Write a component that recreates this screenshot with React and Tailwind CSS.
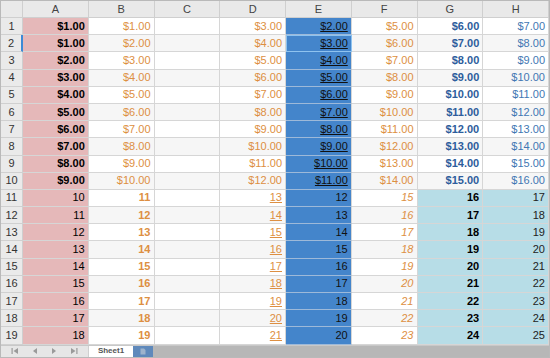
import React from "react";

const cols = ["A", "B", "C", "D", "E", "F", "G", "H"];
const money = (n) => `$${n}.00`;

function cellFor(col, r) {
  // r is 1..19
  const top = r <= 10;
  const base = "flex items-center justify-end pr-[3px] border-r border-b border-[#d6d6d6] whitespace-nowrap";
  const alt = r % 2 === 0 ? "bg-[#f6f6f6]" : "bg-white";
  switch (col) {
    case "A":
      return {
        cls: `${base} bg-[#e5b8b9] text-black ${top ? "font-bold" : ""}`,
        text: top ? money(r === 1 ? 1 : r - 1) : String(r - 1),
      };
    case "B":
      return {
        cls: `${base} ${alt} text-[#dd8f42] ${top ? "" : "font-bold"}`,
        text: top ? money(r) : String(r),
      };
    case "C":
      return { cls: `${base} ${alt}`, text: "" };
    case "D":
      return {
        cls: `${base} ${alt} text-[#dd8f42]`,
        text: top ? money(r + 2) : String(r + 2),
        u: !top,
      };
    case "E":
      return {
        cls: `${base} bg-[#4485cb] border-b-[#9db9d9] text-[#111]`,
        text: top ? money(r + 1) : String(r + 1),
        u: top,
      };
    case "F":
      return {
        cls: `${base} ${alt} text-[#dd8f42] ${top ? "" : "italic"}`,
        text: top ? money(r + 4) : String(r + 4),
      };
    case "G":
      return {
        cls: `${base} ${top ? alt + " text-[#2d5d9c]" : "bg-[#b7dde7] text-black"} font-bold`,
        text: top ? money(r + 5) : String(r + 5),
      };
    case "H":
      return {
        cls: `${base} ${top ? alt + " text-[#4277b3]" : "bg-[#b7dde7] text-[#222]"}`,
        text: top ? money(r + 6) : String(r + 6),
      };
    default:
      return { cls: base, text: "" };
  }
}

export default function App() {
  const rows = Array.from({ length: 19 }, (_, i) => i + 1);
  return (
    <div
      className="w-[550px] h-[358px] bg-white border border-[#b9b9b9] flex flex-col overflow-hidden text-[11px] leading-none"
      style={{ fontFamily: '"Liberation Sans", Arial, sans-serif' }}
    >
      <div className="grid grid-cols-[22px_repeat(8,1fr)]">
        <div className="h-[17px] bg-[#e9e9e9] border-r border-b border-[#cfcfcf]" />
        {cols.map((c) => (
          <div
            key={c}
            className="h-[17px] bg-[#e9e9e9] border-r border-b border-[#cfcfcf] flex items-center justify-center text-[#444]"
          >
            {c}
          </div>
        ))}
        {rows.map((r) => (
          <React.Fragment key={r}>
            <div
              className={`h-[17.2px] bg-[#eaeaea] border-b border-[#d0d0d0] flex items-center justify-center text-[#333] ${
                r === 2 ? "border-r-2 border-r-[#3d8ad6]" : "border-r border-r-[#cfcfcf]"
              }`}
            >
              {r}
            </div>
            {cols.map((c) => {
              const { cls, text, u } = cellFor(c, r);
              const sel = c === "E" && r === 2;
              return (
                <div
                  key={c}
                  className={`h-[17.2px] ${cls} ${sel ? "outline outline-1 -outline-offset-1 outline-[#8fc3ef]" : ""}`}
                >
                  <span className={u ? "underline underline-offset-[1px]" : ""}>{text}</span>
                </div>
              );
            })}
          </React.Fragment>
        ))}
      </div>
      <div className="flex-1 flex bg-[#b7b7b7] border-t border-[#c8c8c8]">
        <div className="w-[87px] bg-[#e6e6e6] flex items-center justify-around px-[4px] text-[#9a9a9a]">
          <svg width="8" height="8" viewBox="0 0 8 8">
            <rect x="0.5" y="1" width="1.2" height="6" fill="#9a9a9a" />
            <path d="M7 1 L2.5 4 L7 7 Z" fill="#9a9a9a" />
          </svg>
          <svg width="8" height="8" viewBox="0 0 8 8">
            <path d="M6 1 L2 4 L6 7 Z" fill="#9a9a9a" />
          </svg>
          <svg width="8" height="8" viewBox="0 0 8 8">
            <path d="M2 1 L6 4 L2 7 Z" fill="#9a9a9a" />
          </svg>
          <svg width="8" height="8" viewBox="0 0 8 8">
            <path d="M1 1 L5.5 4 L1 7 Z" fill="#9a9a9a" />
            <rect x="6.3" y="1" width="1.2" height="6" fill="#9a9a9a" />
          </svg>
        </div>
        <div className="w-[45px] bg-white flex items-center justify-center text-[8px] font-bold text-[#555] border-l border-[#d0d0d0]">
          Sheet1
        </div>
        <div className="w-[20px] bg-[#5f89bb] flex items-center justify-center">
          <svg width="6" height="7" viewBox="0 0 6 7">
            <path d="M0.5 0.5 H4 L5.5 2 V6.5 H0.5 Z" fill="#9db3cc" />
          </svg>
        </div>
      </div>
    </div>
  );
}
